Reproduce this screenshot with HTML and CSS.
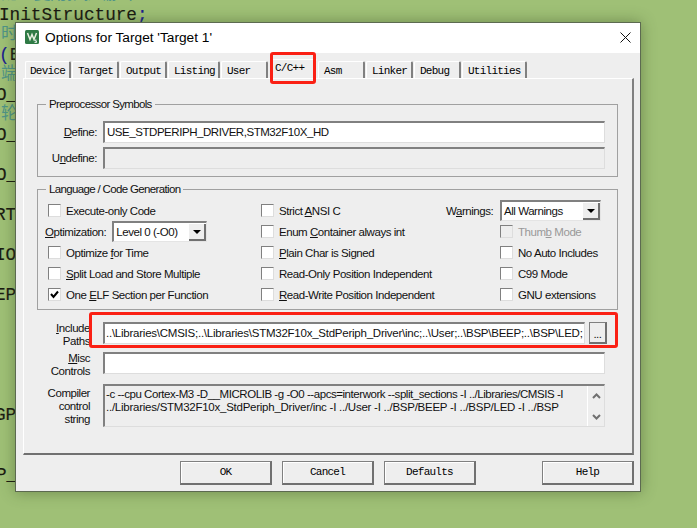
FILE: index.html
```html
<!DOCTYPE html>
<html lang="en">
<head>
<meta charset="utf-8">
<title>Options for Target 'Target 1'</title>
<link rel="stylesheet" href="styles.css">
</head>
<body>
<div class="code"><div class="cm">配置复用推挽输出</div><div>InitStructure<span class="blue">;</span></div><div class="cm">时钟</div><div><span class="blue">(</span>B</div><div class="cm">端口</div><div class="cut">O_</div><div class="cm">轮输</div><div class="cut">O_</div><div>&nbsp;</div><div class="cut">O_</div><div>&nbsp;</div><div class="cut2">RT</div><div>&nbsp;</div><div class="cut2">IO</div><div>&nbsp;</div><div class="cut2">EP</div><div>&nbsp;</div><div>&nbsp;</div><div>&nbsp;</div><div>&nbsp;</div><div>&nbsp;</div><div class="cut2">GP</div><div>&nbsp;</div><div>&nbsp;</div><div class="cut">P_</div></div>

<div class="window">
  <div class="titlebar">
    <svg class="app-icon" width="14" height="14" viewBox="0 0 14 14"><rect width="14" height="14" rx="1.5" fill="#2f7a45"/><path d="M2.5 3 L5 9.5 L7 4.5 L9 9.5 L11.5 3" fill="none" stroke="#e8f0e0" stroke-width="1.5"/><path d="M9.5 12.5 h2 v-1.5 h-1.5 v-1 h1.5" fill="none" stroke="#fff" stroke-width=".8"/></svg>
    <span class="title">Options for Target 'Target 1'</span>
    <svg class="close" width="11" height="11" viewBox="0 0 11 11"><path d="M.5 .5 L10.5 10.5 M10.5 .5 L.5 10.5" stroke="#111" stroke-width="1" fill="none"/></svg>
  </div>
  <div class="body">
    <div class="tabs">
      <div class="tab w47">Device</div>
      <div class="tab w48">Target</div>
      <div class="tab w48">Output</div>
      <div class="tab w53">Listing</div>
      <div class="tab w48 pad-end">User</div>
      <div class="tab active">C/C++</div>
      <div class="tab w48">Asm</div>
      <div class="tab w48">Linker</div>
      <div class="tab w48">Debug</div>
      <div class="tab w65">Utilities</div>
    </div>
    <div class="panel">
      <fieldset class="group g1">
        <legend>Preprocessor Symbols</legend>
        <div class="field-row"><label class="lbl l1"><u>D</u>efine:</label><div class="input">USE_STDPERIPH_DRIVER,STM32F10X_HD</div></div>
        <div class="field-row gap4"><label class="lbl l1">U<u>n</u>define:</label><div class="input off"></div></div>
      </fieldset>
      <fieldset class="group g2">
        <legend>Language / Code Generation</legend>
        <div class="opts">
          <div class="chk"><i class="box"></i>Execute-only Code</div>
          <div class="chk"><i class="box"></i><span>Strict <u>A</u>NSI C</span></div>
          <div class="warn"><span class="warn-l">W<u>a</u>rnings:</span><div class="select sw"><span>All Warnings</span><b class="arrow"></b></div></div>

          <div class="opt-row"><span><u>O</u>ptimization:</span><div class="select so"><span>Level 0 (-O0)</span><b class="arrow"></b></div></div>
          <div class="chk"><i class="box"></i><span>Enum <u>C</u>ontainer always int</span></div>
          <div class="chk dis"><i class="box"></i><span>Thum<u>b</u> Mode</span></div>

          <div class="chk"><i class="box"></i><span>Optimize <u>f</u>or Time</span></div>
          <div class="chk"><i class="box"></i><span><u>P</u>lain Char is Signed</span></div>
          <div class="chk"><i class="box"></i>No Auto Includes</div>

          <div class="chk"><i class="box"></i><span><u>S</u>plit Load and Store Multiple</span></div>
          <div class="chk"><i class="box"></i>Read-Only Position Independent</div>
          <div class="chk"><i class="box"></i>C99 Mode</div>

          <div class="chk"><i class="box on"><svg width="9" height="9" viewBox="0 0 9 9"><path d="M1 4 L3.5 7 L8 1.5" fill="none" stroke="#000" stroke-width="2"/></svg></i><span>One <u>E</u>LF Section per Function</span></div>
          <div class="chk"><i class="box"></i><span><u>R</u>ead-Write Position Independent</span></div>
          <div class="chk"><i class="box"></i>GNU extensions</div>
        </div>
      </fieldset>
      <div class="field-row row-inc">
        <label class="lbl l2"><u>I</u>nclude<br>Paths</label>
        <div class="input inc">..\Libraries\CMSIS;..\Libraries\STM32F10x_StdPeriph_Driver\inc;..\User;..\BSP\BEEP;..\BSP\LED;</div>
        <div class="browse">...</div>
      </div>
      <div class="field-row row-misc">
        <label class="lbl l2"><u>M</u>isc<br>Controls</label>
        <div class="input"></div>
      </div>
      <div class="field-row row-cc">
        <label class="lbl l2 l3">Compiler<br>control<br>string</label>
        <div class="input off cc">
          <div class="cc-text"><span class="cc-line">-c --cpu Cortex-M3 -D__MICROLIB -g -O0 --apcs=interwork --split_sections -I ../Libraries/CMSIS -I</span><span class="cc-line wide">../Libraries/STM32F10x_StdPeriph_Driver/inc -I ../User -I ../BSP/BEEP -I ../BSP/LED -I ../BSP</span></div>
          <div class="cc-scroll">
            <svg width="9" height="6" viewBox="0 0 9 6"><path d="M1 5 L4.5 1.5 L8 5" fill="none" stroke="#707070" stroke-width="2"/></svg>
            <svg width="9" height="6" viewBox="0 0 9 6"><path d="M1 1 L4.5 4.5 L8 1" fill="none" stroke="#707070" stroke-width="2"/></svg>
          </div>
        </div>
      </div>
    </div>
    <div class="actions">
      <div class="btn">OK</div>
      <div class="btn">Cancel</div>
      <div class="btn">Defaults</div>
      <div class="btn help">Help</div>
    </div>
  </div>
  <div class="mark mark-tab"></div>
  <div class="mark mark-inc"></div>
</div>
</body>
</html>
```
FILE: styles.css
```css
* { box-sizing: border-box; }
html, body { margin: 0; height: 100%; }
body {
  background: #9fc076;
  overflow: hidden;
  position: relative;
  font-family: "Liberation Sans", Arial, sans-serif;
  font-size: 11.5px;
  letter-spacing: -0.45px;
  color: #111;
}
u { text-underline-offset: 1px; }

.code {
  position: absolute;
  left: -1px;
  top: -15px;
  font: 17.7px/20px "Liberation Mono", "Noto Sans CJK SC", monospace;
  letter-spacing: 0;
  color: #1a1a12;
  -webkit-text-stroke: .15px #1a1a12;
  white-space: nowrap;
}
.code .cm {
  color: #4f9488;
  -webkit-text-stroke: 0;
  padding-left: 2px;
  font-size: 16.5px;
}
.code .blue { color: #1c1c90; -webkit-text-stroke-color: #1c1c90; }
.code .cut { margin-left: -3px; }
.code .cut2 { margin-left: -4px; }

.window {
  position: absolute;
  left: 15px;
  top: 22px;
  width: 626px;
  height: 470px;
  border: 1px solid #5c6a50;
  background: #f0f0f0;
  box-shadow: 0 0 14px rgba(50, 70, 30, .45);
  display: flex;
  flex-direction: column;
}
.titlebar {
  height: 30px;
  background: #fff;
  display: flex;
  align-items: center;
  padding: 0 9px 2px 9px;
}
.app-icon { flex: none; }
.title {
  margin-left: 6px;
  font: 13.7px "Liberation Sans", sans-serif;
  letter-spacing: 0;
  color: #000;
  flex: 1;
}
.close { flex: none; margin-left: auto; }

.body {
  flex: 1;
  padding: 8px 7px 0 7px;
  background: #eee;
  display: flex;
  flex-direction: column;
}

.tabs {
  display: flex;
  height: 17px;
  padding-left: 2px;
  font: 11px/18px "Liberation Mono", monospace;
  letter-spacing: -0.75px;
  color: #000;
}
.tab {
  height: 17px;
  padding-left: 5px;
  border-top: 1px solid #fff;
  border-left: 1px solid #fff;
  border-right: 2px solid #808080;
  margin-right: 1px;
  border-radius: 2px 2px 0 0;
  white-space: nowrap;
}
.w47 { width: 46px; padding-left: 4px; }
.w48 { width: 47px; }
.w53 { width: 52px; }
.w65 { width: 65px; }
.pad-end { margin-right: 2px; }
.tab.active {
  width: 47px;
  height: 19px;
  margin-top: -2px;
  margin-right: 1px;
  border-right: 0;
  padding-left: 4px;
  line-height: 16px;
  position: relative;
  z-index: 1;
  background: #eee;
}

.panel {
  width: 611px;
  height: 377px;
  background: #eee;
  border-top: 1px solid #fff;
  border-left: 1px solid #fff;
  border-right: 2px solid #808080;
  border-bottom: 2px solid #707070;
  padding: 17px 0 0 13px;
}

.group {
  width: 581px;
  margin: 0;
  border: 1px solid #a0a0a0;
  padding: 0;
  min-width: 0;
}
.group legend {
  margin-left: 8px;
  padding: 0 3px;
  line-height: 17px;
  font-size: 11.5px;
  letter-spacing: -0.65px;
}
.g1 { height: 81px; padding-top: 8px; }
.g2 { height: 129px; margin-top: 4px; padding: 2px 0 0 10px; }
.g2 legend { margin-left: -2px; }

.field-row { display: flex; }
.gap4 { margin-top: 4px; }
.lbl { flex: none; text-align: right; line-height: 13px; }
.l1 { width: 59px; padding-top: 5px; }
.l2 { width: 53px; margin-right: 7px; }
.l3 { padding-top: 3px; }

.input {
  flex: none;
  width: 502px;
  height: 22px;
  margin-left: 6px;
  background: #fff;
  border-top: 2px solid #808080;
  border-left: 2px solid #808080;
  border-right: 1px solid #ddd;
  border-bottom: 1px solid #ddd;
  padding: 0 0 0 2px;
  line-height: 18px;
  white-space: nowrap;
  overflow: hidden;
}
.input.off { background: #eee; }

.opts {
  display: grid;
  grid-template-columns: 213px 239px 1fr;
  grid-auto-rows: 21px;
  align-items: center;
}
.chk { display: flex; align-items: center; height: 21px; white-space: nowrap; }
.box {
  flex: none;
  width: 13px;
  height: 13px;
  margin-right: 5px;
  background: #fff;
  border-top: 1px solid #808080;
  border-left: 1px solid #808080;
  border-right: 1px solid #ddd;
  border-bottom: 1px solid #ddd;
  display: flex;
  align-items: center;
  justify-content: center;
}
.chk.dis { color: #999; }
.chk.dis .box { background: #eee; }

.warn { display: flex; align-items: center; margin-left: -54px; }
.warn-l { width: 54px; }
.opt-row { display: flex; align-items: center; gap: 6px; margin-left: -3px; }

.select {
  display: flex;
  align-items: center;
  justify-content: space-between;
  height: 21px;
  background: #fff;
  border-top: 2px solid #808080;
  border-left: 2px solid #808080;
  border-right: 1px solid #e4e4e4;
  border-bottom: 1px solid #e4e4e4;
  padding-left: 2px;
}
.sw { width: 101px; }
.so { width: 95px; }
.arrow {
  flex: none;
  width: 17px;
  height: 17px;
  background: #eee;
  border-right: 2px solid #707070;
  border-bottom: 2px solid #707070;
  position: relative;
}
.arrow::after {
  content: "";
  position: absolute;
  left: 4px;
  top: 6px;
  border: 4px solid transparent;
  border-top: 4px solid #000;
  border-bottom: 0;
}

.row-inc { margin-top: 12px; height: 22px; }
.inc { width: 482px; padding-left: 1px; letter-spacing: -0.24px; }
.browse {
  flex: none;
  width: 18px;
  height: 22px;
  margin-left: 4px;
  background: #eee;
  border: 1px solid #808080;
  border-right: 2px solid #707070;
  border-bottom: 2px solid #707070;
  text-align: center;
  line-height: 22px;
}
.row-misc { margin-top: 8px; height: 22px; }
.row-cc { margin-top: 10px; height: 43px; }
.cc { height: 43px; display: flex; padding: 0 0 0 1px; }
.cc-text { flex: 1; line-height: 13px; padding-top: 2px; color: #111; min-width: 0; }
.cc-line { display: block; }
.cc-line.wide { letter-spacing: -0.25px; }
.cc-scroll {
  flex: none;
  width: 17px;
  border-left: 1px solid #fff;
  display: flex;
  flex-direction: column;
  align-items: center;
  justify-content: space-between;
  padding: 7px 0 6px;
}
.cc-scroll svg { display: block; }

.actions {
  display: flex;
  gap: 10px;
  margin-top: 6px;
  padding-left: 157px;
}
.btn {
  width: 92px;
  height: 24px;
  background: #eee;
  border: 1px solid #808080;
  border-right: 2px solid #707070;
  border-bottom: 2px solid #707070;
  box-shadow: inset 1px 1px 0 #fff;
  font: 11px/21px "Liberation Mono", monospace;
  letter-spacing: -0.75px;
  text-align: center;
  color: #000;
}
.help { margin-left: auto; margin-right: -1px; }

.mark {
  position: absolute;
  border: 3px solid #fa2014;
  border-radius: 3px;
  z-index: 3;
}
.mark-tab { left: 254px; top: 29px; width: 46px; height: 32px; }
.mark-inc { left: 73px; top: 289px; width: 529px; height: 36px; }
```
